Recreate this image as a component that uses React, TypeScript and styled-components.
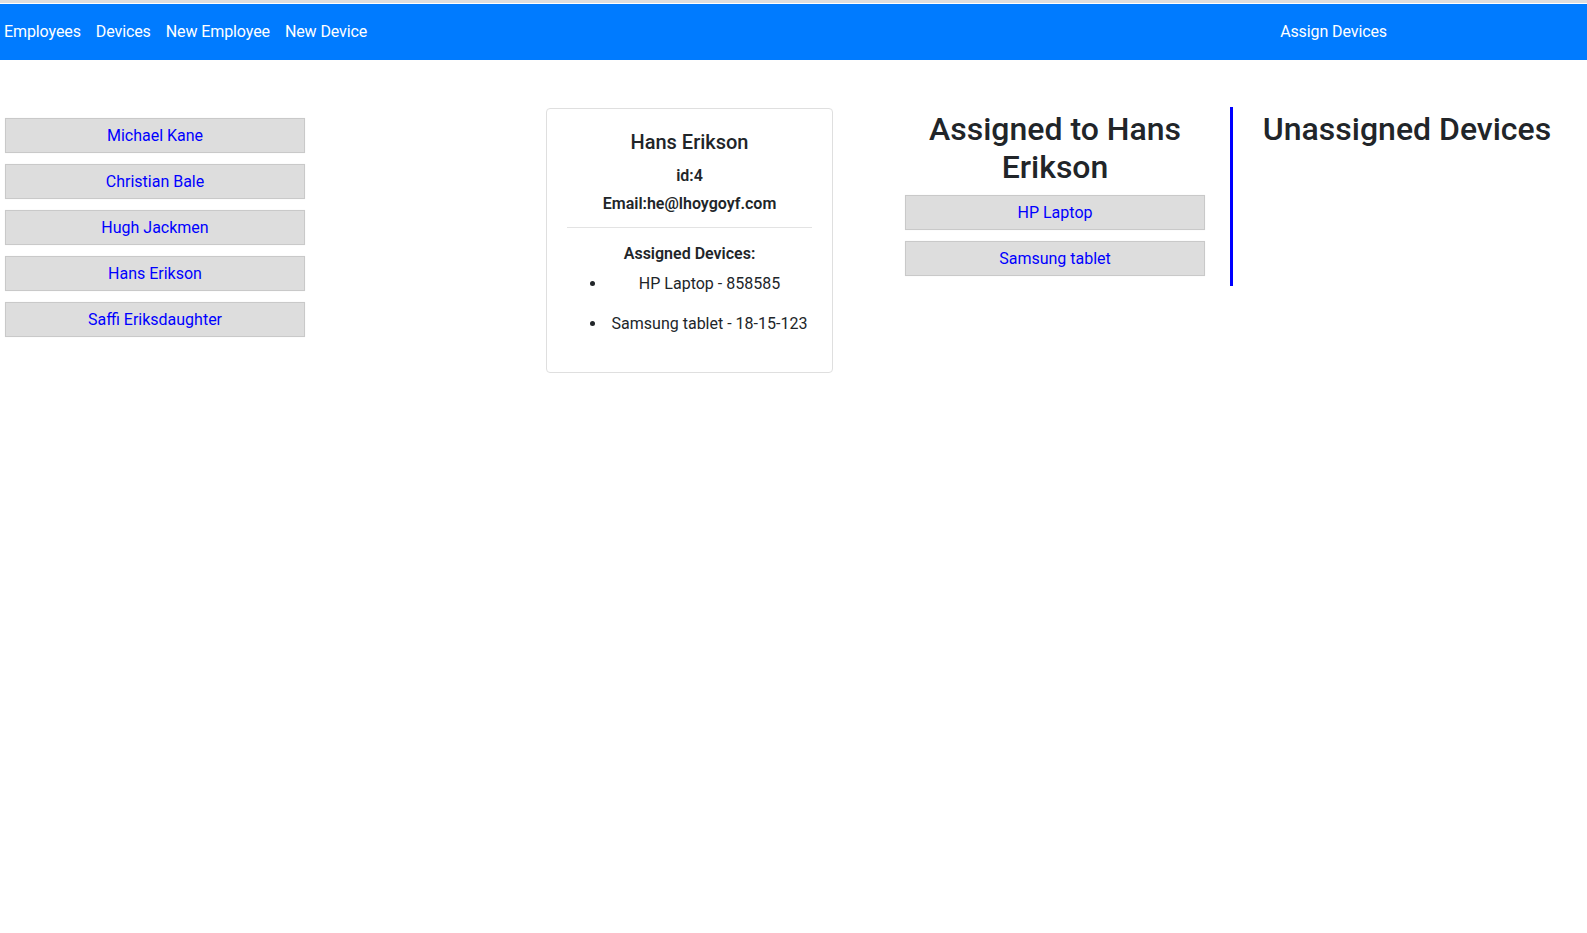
import React from "react";
import styled, { createGlobalStyle } from "styled-components";

const GlobalStyle = createGlobalStyle`
  html { overflow-x: scroll; }
  ::-webkit-scrollbar { height: 10px; }
  ::-webkit-scrollbar-track { background: #f1f1f1; }
  ::-webkit-scrollbar-thumb { background: #c1c1c1; border-top: 2px solid #ececec; }
  ::-webkit-scrollbar-button:horizontal:start:decrement { display: block; width: 12px; background: #f1f1f1; }
  body {
    margin: 0;
    border-top: 3px solid #dedede;
    font-family: Roboto, "Liberation Sans", sans-serif;
    font-size: 16px;
    line-height: 1.5;
    color: #212529;
    background: #fff;
  }
`;

const NavBar = styled.nav`
  display: flex;
  align-items: center;
  height: 56px;
  margin-top: 1px;
  padding: 0 200px 0 4px;
  background: #007bff;
`;

const NavLink = styled.a<{ $right?: boolean }>`
  color: #fff;
  text-decoration: none;
  font-size: 16px;
  letter-spacing: -0.1px;
  margin-right: ${(p) => (p.$right ? "0" : "15px")};
  margin-left: ${(p) => (p.$right ? "auto" : "0")};
  cursor: pointer;
`;

const Main = styled.main`
  display: flex;
  align-items: flex-start;
  padding-top: 47px;
`;

const EmployeeList = styled.div`
  display: flex;
  flex-direction: column;
  gap: 11px;
  width: 300px;
  margin: 11px 0 0 5px;
`;

const ItemButton = styled.button`
  display: block;
  width: 100%;
  height: 35px;
  padding: 0;
  box-sizing: border-box;
  background: #dddddd;
  border: 1px solid #c9c9c9;
  box-shadow: 0 0 1px rgba(0, 0, 0, 0.08);
  color: blue;
  font-family: inherit;
  font-size: 16px;
  cursor: pointer;
`;

const Card = styled.section`
  box-sizing: border-box;
  width: 287px;
  margin: 1px 0 0 241px;
  padding: 20px;
  border: 1px solid #dfdfdf;
  border-radius: 4px;
  text-align: center;
`;

const CardName = styled.h5`
  margin: 1px 0 10px;
  font-size: 20px;
  font-weight: 500;
  line-height: 24px;
`;

const Detail = styled.p`
  margin: 0 0 4px;
  font-weight: 600;
  line-height: 24px;
`;

const Rule = styled.hr`
  margin: 11px 0 14px;
  border: 0;
  border-top: 1px solid #e3e3e3;
`;

const SubTitle = styled.p`
  margin: 0;
  font-weight: 600;
  line-height: 24px;
`;

const DeviceList = styled.ul`
  margin: 6px 0 0;
  padding-left: 40px;
`;

const DeviceItem = styled.li`
  margin-bottom: 16px;
  line-height: 24px;
`;

const AssignedPanel = styled.section`
  width: 300px;
  margin-left: 47px;
  padding: 3px 25px 10px;
  border-right: 3px solid blue;
`;

const UnassignedPanel = styled.section`
  width: 348px;
  padding-top: 3px;
`;

const PanelTitle = styled.h2`
  margin: 0 0 8px;
  font-size: 32px;
  font-weight: 500;
  line-height: 1.2;
  text-align: center;
`;

const ButtonStack = styled.div`
  display: flex;
  flex-direction: column;
  gap: 11px;
`;

const employees = [
  "Michael Kane",
  "Christian Bale",
  "Hugh Jackmen",
  "Hans Erikson",
  "Saffi Eriksdaughter",
];

const selected = {
  name: "Hans Erikson",
  id: 4,
  email: "he@lhoygoyf.com",
  devices: [
    { name: "HP Laptop", serial: "858585" },
    { name: "Samsung tablet", serial: "18-15-123" },
  ],
};

export default function App() {
  return (
    <>
      <GlobalStyle />
      <NavBar>
        <NavLink>Employees</NavLink>
        <NavLink>Devices</NavLink>
        <NavLink>New Employee</NavLink>
        <NavLink>New Device</NavLink>
        <NavLink $right>Assign Devices</NavLink>
      </NavBar>
      <Main>
        <EmployeeList>
          {employees.map((e) => (
            <ItemButton key={e}>{e}</ItemButton>
          ))}
        </EmployeeList>
        <Card>
          <CardName>{selected.name}</CardName>
          <Detail>id:{selected.id}</Detail>
          <Detail>Email:{selected.email}</Detail>
          <Rule />
          <SubTitle>Assigned Devices:</SubTitle>
          <DeviceList>
            {selected.devices.map((d) => (
              <DeviceItem key={d.name}>
                {d.name} - {d.serial}
              </DeviceItem>
            ))}
          </DeviceList>
        </Card>
        <AssignedPanel>
          <PanelTitle>Assigned to {selected.name}</PanelTitle>
          <ButtonStack>
            {selected.devices.map((d) => (
              <ItemButton key={d.name}>{d.name}</ItemButton>
            ))}
          </ButtonStack>
        </AssignedPanel>
        <UnassignedPanel>
          <PanelTitle>Unassigned Devices</PanelTitle>
        </UnassignedPanel>
      </Main>
    </>
  );
}
